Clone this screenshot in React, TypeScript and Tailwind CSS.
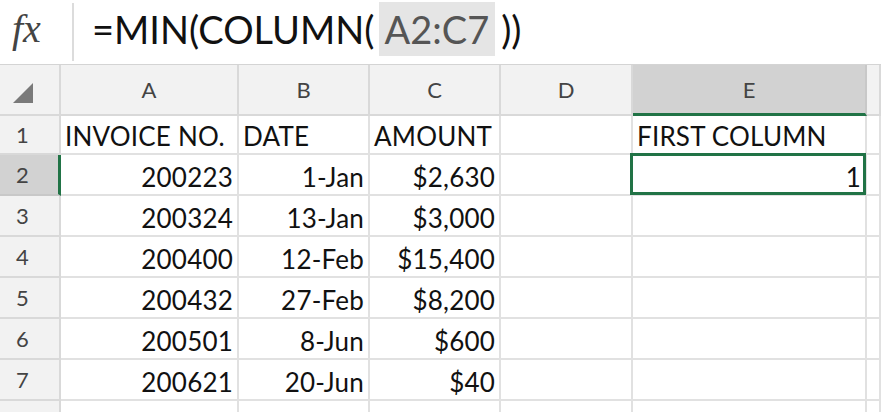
import React from 'react'

const font = { fontFamily: 'Lato, "Open Sans", sans-serif' }

const cols = ['A', 'B', 'C', 'D', 'E', 'F']

const rows = [
  ['200223', '1-Jan', '$2,630'],
  ['200324', '13-Jan', '$3,000'],
  ['200400', '12-Feb', '$15,400'],
  ['200432', '27-Feb', '$8,200'],
  ['200501', '8-Jun', '$600'],
  ['200621', '20-Jun', '$40'],
]

const gridCols = 'grid grid-cols-[61px_178px_131px_131px_132px_234px_1fr]'

function Cell({ children, right, className = '' }: { children?: React.ReactNode; right?: boolean; className?: string }) {
  return (
    <div
      className={`relative flex items-end border-r-2 border-b-2 border-[#e1e1e1] bg-white pb-[4px] text-[26px] leading-none tracking-[0.2px] text-[#111] ${
        right ? 'justify-end pr-[4px]' : 'pl-[4px]'
      } ${className}`}
    >
      {children}
    </div>
  )
}

function RowHead({ n, active }: { n: number | string; active?: boolean }) {
  return (
    <div
      className={`flex items-center border-b-2 pl-[16px] text-[22px] text-[#444] ${
        active
          ? 'border-r-[3px] border-b-[#c8c8c8] border-r-[#217346] bg-[#d2d2d2]'
          : 'border-r-2 border-[#d9d9d9] bg-[#f2f2f2]'
      }`}
    >
      {n}
    </div>
  )
}

export default function App() {
  return (
    <div className="h-[412px] w-[881px] overflow-hidden bg-white" style={font}>
      {/* formula bar */}
      <div className="flex h-[65px] items-stretch border-b border-[#d4d4d4] bg-white">
        <div className="flex w-[72px] items-center pb-[6px] pl-[12px]">
          <span className="text-[40px] leading-none italic text-[#444]" style={{ fontFamily: '"Liberation Serif", serif' }}>
            fx
          </span>
        </div>
        <div className="my-[3px] w-[2px] bg-[#dcdcdc]" />
        <div className="flex items-center pb-[6px] pl-[18px] text-[38px] leading-none text-[#111]">
          <span>=MIN(COLUMN(</span>
          <span className="ml-[4px] flex h-[54px] items-center bg-[#e5e5e5] px-[6px] text-[#555]">A2:C7</span>
          <span className="ml-[6px]">))</span>
        </div>
      </div>

      {/* column headers */}
      <div className={`${gridCols} h-[51px]`}>
        <div className="flex items-end border-r-2 border-b-2 border-[#d9d9d9] bg-[#f2f2f2] pb-[11px] pl-[13px]">
          <svg width="20" height="20" viewBox="0 0 20 20">
            <polygon points="20,0 20,20 0,20" fill="#7a7a7a" />
          </svg>
        </div>
        {cols.map((c) => (
          <div
            key={c}
            className={`flex items-center justify-center text-[22px] text-[#444] ${
              c === 'E'
                ? 'border-r-2 border-b-[3px] border-r-[#c8c8c8] border-b-[#217346] bg-[#d2d2d2]'
                : 'border-r-2 border-b-2 border-[#d9d9d9] bg-[#f2f2f2]'
            }`}
          >
            {c === 'F' ? '' : c}
          </div>
        ))}
      </div>

      {/* row 1 */}
      <div className={`${gridCols} h-[39px]`}>
        <RowHead n={1} />
        <Cell>INVOICE NO.</Cell>
        <Cell>DATE</Cell>
        <Cell>AMOUNT</Cell>
        <Cell />
        <Cell>FIRST COLUMN</Cell>
        <Cell />
      </div>

      {rows.map((r, i) => (
        <div key={i} className={`${gridCols} h-[41px]`}>
          <RowHead n={i + 2} active={i === 0} />
          <Cell right>{r[0]}</Cell>
          <Cell right>{r[1]}</Cell>
          <Cell right>{r[2]}</Cell>
          <Cell />
          {i === 0 ? (
            <Cell right>
              <div className="pointer-events-none absolute -top-[2px] -left-[3px] -right-[1px] -bottom-[1px] border-[3px] border-[#217346]" />
              1
            </Cell>
          ) : (
            <Cell />
          )}
          <Cell />
        </div>
      ))}

      {/* row 8 partial */}
      <div className={`${gridCols} h-[20px]`}>
        <RowHead n="" />
        <Cell />
        <Cell />
        <Cell />
        <Cell />
        <Cell />
        <Cell />
      </div>
    </div>
  )
}
